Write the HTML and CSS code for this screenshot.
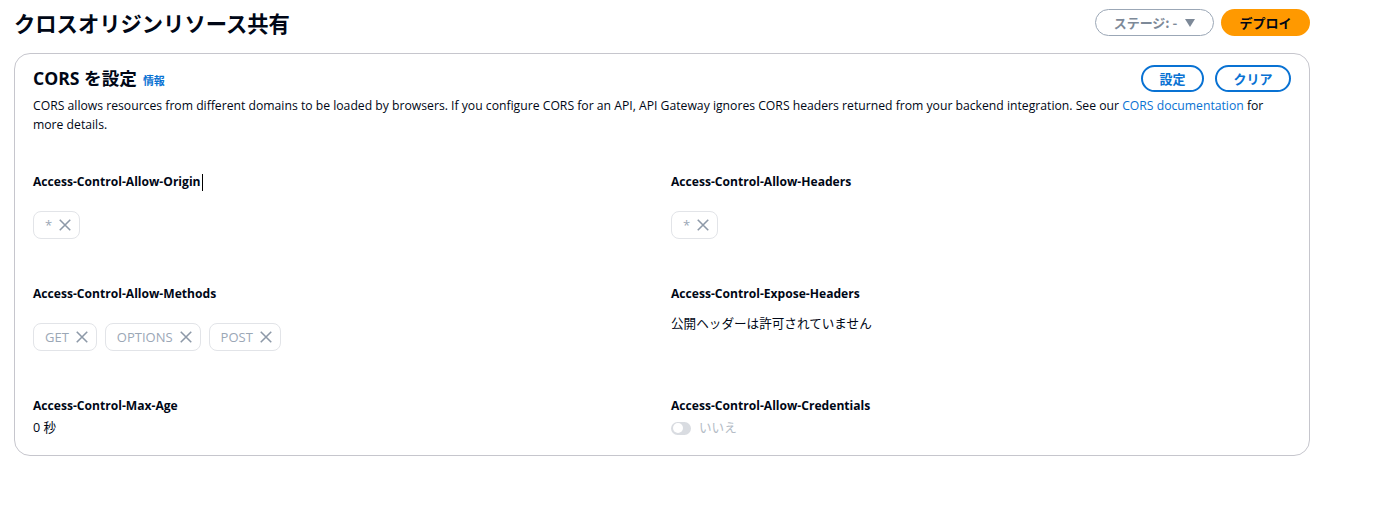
FILE: index.html
```html
<!DOCTYPE html>
<html lang="ja">
<head>
<meta charset="utf-8">
<title>クロスオリジンリソース共有</title>
<link rel="stylesheet" href="styles.css">
</head>
<body>
<div class="page">
  <header class="page-header">
    <h1 class="page-title">クロスオリジンリソース共有</h1>
    <div class="header-actions">
      <button class="btn btn-stage">ステージ: - <span class="caret"></span></button>
      <button class="btn btn-primary">デプロイ</button>
    </div>
  </header>

  <section class="card">
    <div class="card-head">
      <h2 class="card-title">CORS を設定 <a class="info" href="#">情報</a></h2>
      <div class="card-actions">
        <button class="btn btn-normal">設定</button>
        <button class="btn btn-normal">クリア</button>
      </div>
    </div>
    <p class="desc">CORS allows resources from different domains to be loaded by browsers. If you configure CORS for an API, API Gateway ignores CORS headers returned from your backend integration. See our <a href="#">CORS documentation</a> for more details.</p>

    <div class="grid">
      <div class="field">
        <div class="label">Access-Control-Allow-Origin<span class="cursor"></span></div>
        <div class="tokens">
          <span class="token"><span class="token-text">*</span><svg class="x" viewBox="0 0 16 16"><path d="M2 2l12 12M14 2L2 14"/></svg></span>
        </div>
      </div>
      <div class="field">
        <div class="label">Access-Control-Allow-Headers</div>
        <div class="tokens">
          <span class="token"><span class="token-text">*</span><svg class="x" viewBox="0 0 16 16"><path d="M2 2l12 12M14 2L2 14"/></svg></span>
        </div>
      </div>
      <div class="field">
        <div class="label">Access-Control-Allow-Methods</div>
        <div class="tokens">
          <span class="token"><span class="token-text">GET</span><svg class="x" viewBox="0 0 16 16"><path d="M2 2l12 12M14 2L2 14"/></svg></span>
          <span class="token"><span class="token-text">OPTIONS</span><svg class="x" viewBox="0 0 16 16"><path d="M2 2l12 12M14 2L2 14"/></svg></span>
          <span class="token"><span class="token-text">POST</span><svg class="x" viewBox="0 0 16 16"><path d="M2 2l12 12M14 2L2 14"/></svg></span>
        </div>
      </div>
      <div class="field">
        <div class="label">Access-Control-Expose-Headers</div>
        <div class="value value-spaced">公開ヘッダーは許可されていません</div>
      </div>
      <div class="field">
        <div class="label">Access-Control-Max-Age</div>
        <div class="value">0 秒</div>
      </div>
      <div class="field">
        <div class="label">Access-Control-Allow-Credentials</div>
        <div class="value toggle-row"><span class="toggle"><span class="knob"></span></span><span class="muted">いいえ</span></div>
      </div>
    </div>
  </section>
</div>
</body>
</html>
```

FILE: styles.css
```css
* { box-sizing: border-box; }
html, body { margin: 0; padding: 0; background: #ffffff; }
body {
  font-family: "Open Sans", "Noto Sans CJK JP", sans-serif;
  color: #000716;
  font-size: 14px;
}
.page {
  width: 1296px;
  margin-left: 14px;
}
.page-header {
  display: flex;
  align-items: center;
  justify-content: space-between;
  height: 53px;
  padding-bottom: 8px;
}
.page-title {
  margin: 0;
  font-size: 21.3px;
  font-weight: 700;
  line-height: 28px;
  letter-spacing: 0;
  font-family: "Noto Sans CJK JP", sans-serif;
}
.header-actions {
  display: flex;
  gap: 7px;
  align-items: center;
}
.btn {
  font-family: "Noto Sans CJK JP", "Open Sans", sans-serif;
  font-size: 13px;
  font-weight: 700;
  height: 27px;
  border-radius: 20px;
  padding: 0 16px;
  display: inline-flex;
  align-items: center;
  justify-content: center;
  background: #fff;
  cursor: pointer;
  line-height: 1;
}
.btn-stage {
  width: 119px;
  border: 1px solid #9ba7b6;
  color: #7d8998;
  gap: 8px;
}
.caret {
  width: 0; height: 0;
  border-left: 5px solid transparent;
  border-right: 5px solid transparent;
  border-top: 8px solid #7d8998;
}
.btn-primary {
  width: 89px;
  border: none;
  background: #ff9900;
  color: #000716;
}
.btn-normal {
  border: 2px solid #0972d3;
  color: #0972d3;
}
.card {
  border: 1px solid #c6c6cd;
  border-radius: 16px;
  padding: 11px 18px 17px 18px;
}
.card-head {
  display: flex;
  justify-content: space-between;
  align-items: center;
  height: 27px;
}
.card-actions {
  display: flex;
  gap: 11px;
}
.card-actions .btn:first-child { width: 63px; }
.card-actions .btn:last-child { width: 76px; }
.card-title {
  margin: 0;
  font-size: 17.6px;
  font-weight: 700;
  line-height: 24px;
  display: flex;
  align-items: baseline;
}
.info {
  font-size: 11px;
  color: #0972d3;
  text-decoration: none;
  font-weight: 700;
  margin-left: 6px;
  font-family: "Noto Sans CJK JP", sans-serif;
}
.desc {
  margin: 4px 0 0 0;
  font-size: 12.2px;
  line-height: 19px;
  color: #000716;
  padding-right: 20px;
}
.desc a { color: #0972d3; text-decoration: none; }
.grid {
  display: grid;
  grid-template-columns: 1fr 1fr;
  column-gap: 18px;
  row-gap: 45px;
  margin-top: 38px;
}
.field { display: flex; flex-direction: column; align-items: flex-start; }
.label {
  font-size: 12.1px;
  font-weight: 700;
  line-height: 20px;
  display: flex;
  align-items: center;
}
.cursor {
  display: inline-block;
  width: 1px;
  height: 17px;
  background: #000;
  margin-left: 1px;
}
.tokens {
  display: flex;
  gap: 8px;
  margin-top: 19px;
}
.token {
  height: 28px;
  border: 1px solid #e2e4e8;
  border-radius: 8px;
  display: inline-flex;
  align-items: center;
  padding: 0 4px 0 11px;
  gap: 6px;
  color: #9ba7b6;
  font-size: 13px;
}
.x {
  width: 14px;
  height: 14px;
  stroke: #8d99a8;
  stroke-width: 1.8;
  fill: none;
  margin-right: 3px;
}
.value {
  margin-top: 2px;
  font-size: 12.6px;
  line-height: 20px;
  font-family: "Open Sans", "Noto Sans CJK JP", sans-serif;
}
.value-spaced { margin-top: 10px; }
.toggle-row { display: flex; align-items: center; gap: 8px; }
.toggle {
  width: 20px;
  height: 13px;
  border-radius: 7px;
  background: #d9dce1;
  position: relative;
  display: inline-block;
}
.knob {
  position: absolute;
  left: 1.5px;
  top: 1.5px;
  width: 10px;
  height: 10px;
  border-radius: 50%;
  background: #fff;
}
.muted { color: #b4bcc6; }
```
